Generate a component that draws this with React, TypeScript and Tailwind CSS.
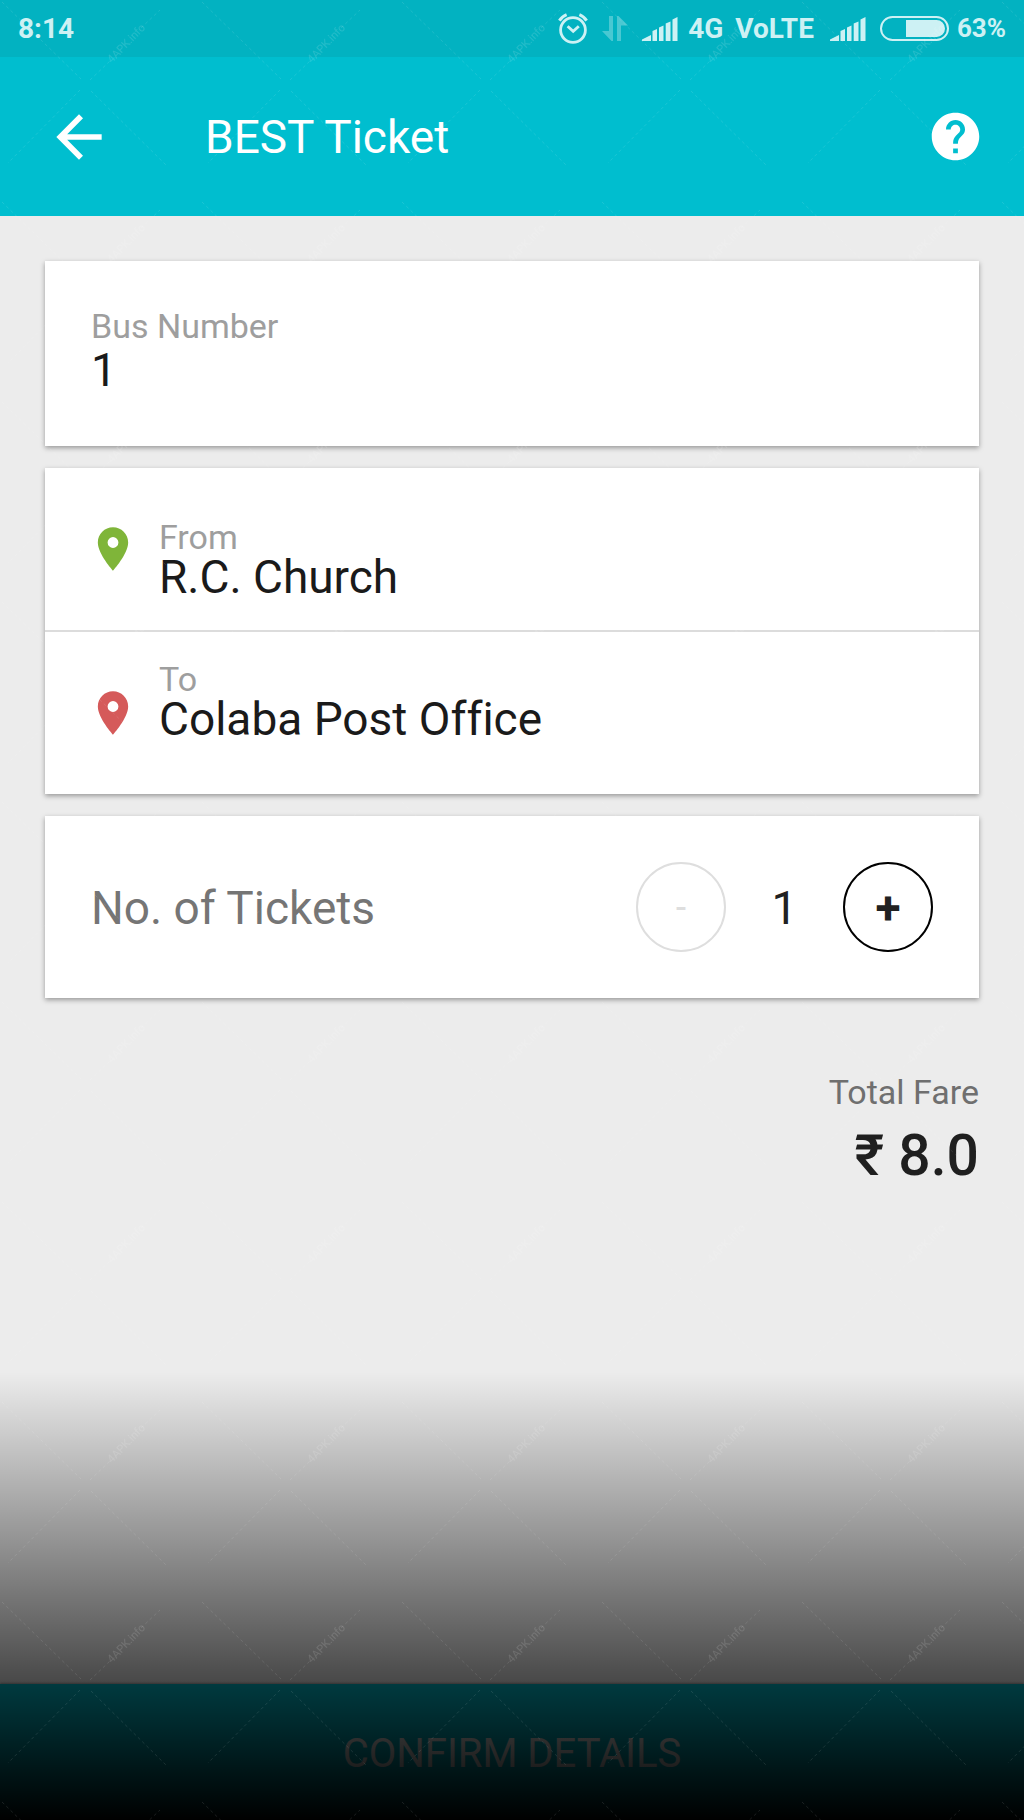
import { useState } from 'react';
import { MdArrowBack, MdHelp, MdPlace } from 'react-icons/md';

const FARE = 8;

const AlarmIcon = () => (
  <svg width="30" height="31" viewBox="0 0 30 31" fill="none" stroke="currentColor">
    <circle cx="15" cy="17" r="12.4" strokeWidth="2.8" />
    <path d="M1.4 7.6 Q4 3.4 8.6 1.6" strokeWidth="3" />
    <path d="M28.6 7.6 Q26 3.4 21.4 1.6" strokeWidth="3" />
    <path d="M9.6 13.2 L15.2 18.4 L20.8 13.2" strokeWidth="2.8" />
  </svg>
);

const DataArrowsIcon = () => (
  <svg
    className="opacity-35"
    width="26"
    height="25"
    viewBox="0 0 26 25"
    fill="currentColor"
  >
    <path d="M7 0h4v25H9.5L0 15h7z" />
    <path d="M19 25h-4V0h1.500L26 9.500h-7z" />
  </svg>
);

const SignalIcon = () => (
  <svg width="36" height="24" viewBox="0 0 36 24" fill="currentColor">
    <path d="M0 24v-1.500L9 18v6z" />
    <path d="M10.500 24v-10l4.500-2V24z" />
    <path d="M17 24V10.500l4.500-2V24z" />
    <path d="M23.700 24V6.500L28.500 4.500V24z" />
    <path d="M30.500 24V2.500L35.500 0V24z" />
  </svg>
);

const BatteryIcon = () => (
  <svg width="69" height="25" viewBox="0 0 69 25">
    <rect
      x="1"
      y="1"
      width="67"
      height="23"
      rx="11.5"
      fill="none"
      stroke="currentColor"
      strokeWidth="2"
    />
    <path d="M26 4h30.500a8.500 8.500 0 0 1 0 17H26z" fill="currentColor" />
  </svg>
);

const StatusBar = () => (
  <div className="flex h-[57px] items-center justify-between bg-[#02b2c1] px-[18px] text-[28px] font-bold text-[#cdf1f4]">
    <span>8:14</span>
    <div className="flex items-center">
      <AlarmIcon />
      <div className="ml-3.5 flex items-center gap-3.5">
        <DataArrowsIcon />
        <SignalIcon />
      </div>
      <span className="ml-2.5">4G</span>
      <span className="ml-3">VoLTE</span>
      <div className="ml-4 flex items-center gap-3.5">
        <SignalIcon />
        <BatteryIcon />
      </div>
      <span className="ml-2 text-[26px]">63%</span>
    </div>
  </div>
);

const Header = () => (
  <header className="flex h-[159px] items-center bg-[#00becf] pr-10 pl-[45px] text-white">
    <button type="button" aria-label="Back" className="cursor-pointer">
      <MdArrowBack size={68} />
    </button>
    <h1 className="ml-[92px] flex-1 pt-0.5 text-[46px]">BEST Ticket</h1>
    <button type="button" aria-label="Help" className="cursor-pointer">
      <MdHelp size={57} />
    </button>
  </header>
);

interface FieldProps {
  label: string;
  value: string;
  className?: string;
}

const Field = ({ label, value, className }: FieldProps) => (
  <dl className={className}>
    <dt className="text-[34px] leading-[34px] text-[#9e9e9e]">{label}</dt>
    <dd className="text-[46px] leading-[46px] text-[#1a1a1a]">{value}</dd>
  </dl>
);

// Faint repeating mark laid over the whole screen
const Watermark = () => (
  <svg
    aria-hidden="true"
    className="pointer-events-none absolute inset-0 h-full w-full"
  >
    <defs>
      <pattern id="mark" width="200" height="200" patternUnits="userSpaceOnUse">
        <g stroke="#fff" strokeOpacity="0.1" strokeDasharray="3 3">
          <path d="M2 2L81 79M91 91L167 166M80 90L8 163M90 80L110 61M141 28L160 10" />
        </g>
        <text
          x="126"
          y="47"
          transform="rotate(-46 126 43)"
          textAnchor="middle"
          fontSize="11"
          fill="#fff"
          fillOpacity="0.13"
        >
          4APK.info
        </text>
      </pattern>
    </defs>
    <rect width="100%" height="100%" fill="url(#mark)" />
  </svg>
);

const card = 'bg-white shadow-[0_2px_5px_rgba(0,0,0,0.36)]';

export default function App() {
  const [count, setCount] = useState(1);

  return (
    <div className="relative flex min-h-screen flex-col bg-[#ececec] font-[Roboto,sans-serif] [font-variant-ligatures:none]">
      <StatusBar />
      <Header />

      <main className="flex flex-1 flex-col gap-[22px] px-[45px] pt-[45px]">
        <section className={`${card} px-[46px] pt-12 pb-[53px]`}>
          <Field label="Bus Number" value="1" className="flex flex-col gap-1" />
        </section>

        <section className={card}>
          <div className="flex items-center gap-5 border-b-2 border-[#dcdcdc] pl-[42px]">
            <MdPlace size={52} color="#7fb539" />
            <Field label="From" value="R.C. Church" className="pt-[52px] pb-[30px]" />
          </div>
          <div className="flex items-center gap-5 pl-[42px]">
            <MdPlace size={52} color="#d55a5a" />
            <Field
              label="To"
              value="Colaba Post Office"
              className="pt-[30px] pb-[52px]"
            />
          </div>
        </section>

        <section
          className={`${card} flex items-center justify-between px-[46px] py-[46px]`}
        >
          <h2 className="pt-0.5 text-[46px] leading-[46px] text-[#757575]">
            No. of Tickets
          </h2>
          <div className="flex items-center">
            <button
              type="button"
              aria-label="Remove a ticket"
              disabled={count <= 1}
              onClick={() => setCount(count - 1)}
              className="size-[90px] rounded-full border-2 border-black text-[34px] font-medium text-[#212121] disabled:border-[#dedede] disabled:text-[#dedede]"
            >
              -
            </button>
            <output className="w-[117px] pt-0.5 text-center text-[46px] text-[#212121]">
              {count}
            </output>
            <button
              type="button"
              aria-label="Add a ticket"
              onClick={() => setCount(count + 1)}
              className="size-[90px] cursor-pointer rounded-full border-2 border-black pt-0.5 text-[46px] font-bold text-[#212121]"
            >
              +
            </button>
          </div>
        </section>

        <section className="pt-[50px] text-right">
          <p className="text-[34px] leading-[44px] text-[#6f6f6f]">Total Fare</p>
          <p className="mt-2 text-[57px] leading-[68px] font-medium text-[#1f1f1f]">
            ₹ {(count * FARE).toFixed(1)}
          </p>
        </section>
      </main>

      <footer>
        <button
          type="button"
          className="h-[136px] w-full bg-[#00becf] pt-1 text-[40px] text-white shadow-[0_-1px_2px_rgba(0,0,0,0.3)]"
        >
          CONFIRM DETAILS
        </button>
      </footer>

      <div className="pointer-events-none absolute inset-x-0 bottom-0 h-[448px] bg-linear-to-b from-black/0 to-black" />
      <Watermark />
    </div>
  );
}
